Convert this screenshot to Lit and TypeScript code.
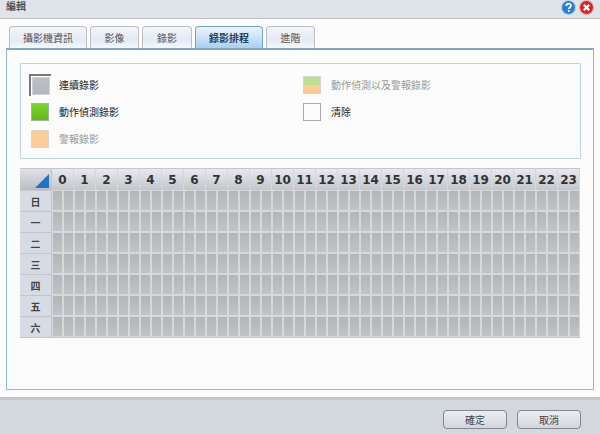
import { LitElement, html, css } from "lit";
import { customElement } from "lit/decorators.js";

const TABS = ["攝影機資訊", "影像", "錄影", "錄影排程", "進階"];
const TAB_W = [78, 49, 50, 68, 49];
const DAYS = ["日", "一", "二", "三", "四", "五", "六"];
const HOURS = Array.from({ length: 24 }, (_, i) => i);
const HALVES = Array.from({ length: 48 }, (_, i) => i);

@customElement("app-root")
export class AppRoot extends LitElement {
  static styles = css`
    :host { display: block; width: 600px; height: 434px; font-family: "Liberation Sans", "Noto Sans CJK TC", sans-serif; font-size: 10px; color: #333; background: #fcfcfd; overflow: hidden; }
    .win { display: flex; flex-direction: column; height: 434px; }
    .title { height: 18px; flex: none; background: #dfe3ea; border-bottom: 1px solid #bcbec0; display: flex; align-items: flex-start; padding: 0 6px 0 6px; }
    .title .t { flex: 1; font-size: 10px; line-height: 12px; padding-top: 1px; font-weight: 700; color: #555; }
    .title svg { display: block; margin-left: 3px; }
    .body { flex: none; height: 378px; padding: 7px 6px; box-sizing: border-box; display: flex; flex-direction: column; }
    .tabs { display: flex; gap: 3px; height: 22px; padding-left: 3px; flex: none; }
    .tab { box-sizing: border-box; height: 22px; border: 1px solid #bdbfc2; border-bottom: none; border-radius: 4px 4px 0 0; background: linear-gradient(#f4f6f9, #e4eaf4 60%, #f5f8fc); display: flex; align-items: center; justify-content: center; color: #555; }
    .tab.on { border-color: #6fa5c8; background: linear-gradient(#eef5fb, #a9d0ef); color: #24425c; font-weight: 700; }
    .panel { flex: 1; border: 1px solid #8fbbd6; border-top: 2px solid #7fa9c6; padding: 13px 12px 0 13px; background: #fcfcfd; display: flex; flex-direction: column; gap: 9px; }
    .legend { box-sizing: border-box; height: 96px; flex: none; border: 1px solid #bcd5e6; border-radius: 1px; display: grid; grid-template-columns: 272px 1fr; grid-auto-rows: 27px; padding: 7px 0 0 10px; }
    .item { display: flex; align-items: center; gap: 10px; color: #222; }
    .item.dim { color: #999; }
    .sw { box-sizing: border-box; width: 18px; height: 18px; flex: none; border: 1px solid #a8aaac; }
    .sw.gray { width: 22px; height: 22px; margin: -2px -2px -2px -2px; border: 0; border-top: 2px solid #77797b; border-left: 2px solid #77797b; background: #fff; padding: 1px; }
    .sw.gray::before { content: ""; display: block; width: 100%; height: 100%; box-sizing: border-box; border: 1px solid #cfd1d3; background: linear-gradient(#bcc0c4, #b4b8bc); }
    .sw.green { background: linear-gradient(#79d52b, #5fba1a); border-color: #a4b49e; }
    .sw.orange { background: #fccb96; border-color: #d9d5d0; }
    .sw.both { background: linear-gradient(#b9e28c 50%, #fccb96 50%); border-color: #d3d5d4; }
    .sw.clear { background: #fcfcfd; }
    .grid { display: grid; grid-template-columns: 32px repeat(48, 11px); grid-template-rows: 22px repeat(7, 21px); width: 560px; flex: none; margin-right: -1px; background: #dde1e8; border-bottom: 1px solid #c4c6c8; }
    .corner { background: linear-gradient(#dfe3e9, #b9bdc3); border-right: 1px solid #c4c6c8; border-top: 1px solid #c4c6c8; position: relative; box-sizing: border-box; }
    .hr { grid-column: span 2; background: linear-gradient(#e6e9ed, #c3c7cc); border-right: 1px solid #d4d6d9; border-top: 1px solid #c4c6c8; box-sizing: border-box; display: flex; align-items: center; justify-content: center; font: 700 12px "DejaVu Sans", sans-serif; color: #333; }
    .corner svg { position: absolute; right: 2px; bottom: 2px; }
    .day { background: #d7dce4; border-top: 1px solid #c4c6c8; border-right: 1px solid #c4c6c8; box-sizing: border-box; display: flex; align-items: center; justify-content: center; font-size: 10px; font-weight: 700; color: #444; }
    .cell { background: linear-gradient(#b3b6b9, #c1c4c7); border: 1px solid #d6d8da; box-sizing: border-box; }
    .foot { flex: 1; background: #d3d7de; border-top: 3px solid #c5c6c8; display: flex; justify-content: flex-end; align-items: flex-start; gap: 10px; padding: 10px 19px 0 0; }
    .btn { box-sizing: border-box; width: 64px; height: 19px; border: 1px solid #85878a; border-radius: 4px; background: linear-gradient(#eceef1, #d2d5da); display: flex; align-items: center; justify-content: center; color: #444; }
  `;

  render() {
    return html`<div class="win">
      <div class="title">
        <span class="t">編輯</span>
        <svg width="15" height="15" viewBox="0 0 15 15"><circle cx="7.5" cy="7.5" r="7" fill="#2a7fd0" stroke="#b9d6f0"/><path d="M5.3 6c0-3 4.6-3 4.6-.3 0 1.800-2.100 1.700-2.100 3.300" fill="none" stroke="#fff" stroke-width="1.700"/><circle cx="7.800" cy="11" r="1" fill="#fff"/></svg>
        <svg width="15" height="15" viewBox="0 0 15 15"><circle cx="7.5" cy="7.5" r="7" fill="#d8262a" stroke="#f2b6b6"/><path d="M4.800 4.800l5.400 5.400M10.200 4.800l-5.400 5.400" stroke="#fff" stroke-width="2.200"/></svg>
      </div>
      <div class="body">
        <div class="tabs">
          ${TABS.map((t, i) => html`<div class="tab ${i === 3 ? "on" : ""}" style="width:${TAB_W[i]}px">${t}</div>`)}
        </div>
        <div class="panel">
          <div class="legend">
            <div class="item"><span class="sw gray"></span>連續錄影</div>
            <div class="item dim"><span class="sw both"></span>動作偵測以及警報錄影</div>
            <div class="item"><span class="sw green"></span>動作偵測錄影</div>
            <div class="item"><span class="sw clear"></span>清除</div>
            <div class="item dim"><span class="sw orange"></span>警報錄影</div>
          </div>
          <div class="grid">
            <div class="corner"><svg width="14" height="14" viewBox="0 0 14 14"><path d="M14 0V14H0Z" fill="#1f73cf"/></svg></div>
            ${HOURS.map((h) => html`<div class="hr">${h}</div>`)}
            ${DAYS.map((d) => html`<div class="day">${d}</div>${HALVES.map(() => html`<div class="cell"></div>`)}`)}
          </div>
        </div>
      </div>
      <div class="foot"><div class="btn">確定</div><div class="btn">取消</div></div>
    </div>`;
  }
}
